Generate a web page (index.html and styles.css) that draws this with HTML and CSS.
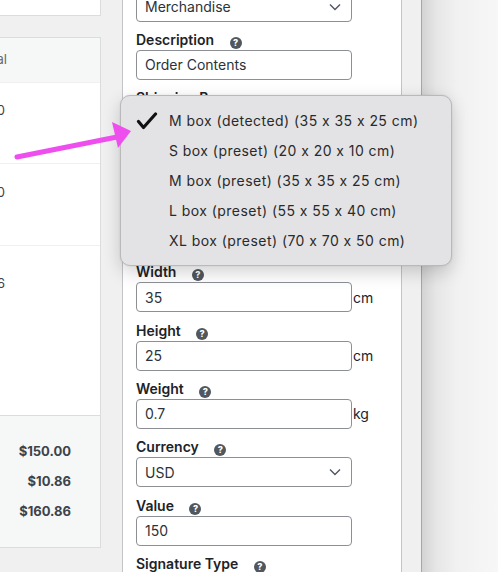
FILE: index.html
```html
<!DOCTYPE html>
<html>
<head>
<meta charset="utf-8">
<link rel="stylesheet" href="styles.css">
</head>
<body>
<div class="page">
  <div class="left">
    <div class="card card-top"></div>
    <div class="card orders">
      <div class="thead"><span>Total</span></div>
      <div class="row r1"><span>$150.00</span></div>
      <div class="row r2"><span>$150.00</span></div>
      <div class="row r3"><span>$10.86</span></div>
      <div class="totals">
        <div class="tline"><span class="tlabel">Items Subtotal:</span><b>$150.00</b></div>
        <div class="tline"><span class="tlabel">Shipping:</span><b>$10.86</b></div>
        <div class="tline"><span class="tlabel">Order Total:</span><b>$160.86</b></div>
      </div>
    </div>
  </div>
  <div class="gutter"></div>
  <div class="panel">
    <div class="form">
      <div class="field">
        <div class="label">Contents Type <span class="help">?</span></div>
        <div class="select"><span>Merchandise</span><svg class="chev" width="12" height="8" viewBox="0 0 12 8"><path d="M1 1.5 L6 6.5 L11 1.5" fill="none" stroke="#50575e" stroke-width="1.4"/></svg></div>
      </div>
      <div class="field">
        <div class="label">Description <span class="help">?</span></div>
        <input class="input" value="Order Contents">
      </div>
      <div class="field">
        <div class="label">Shipping Box <span class="help">?</span></div>
        <div class="select"><span></span><svg class="chev" width="12" height="8" viewBox="0 0 12 8"><path d="M1 1.5 L6 6.5 L11 1.5" fill="none" stroke="#50575e" stroke-width="1.4"/></svg></div>
        <div class="box-gap"></div>
      </div>
      <div class="field">
        <div class="label">Width <span class="help">?</span></div>
        <div class="unitrow"><input class="input" value="35"><span class="unit">cm</span></div>
      </div>
      <div class="field">
        <div class="label">Height <span class="help">?</span></div>
        <div class="unitrow"><input class="input" value="25"><span class="unit">cm</span></div>
      </div>
      <div class="field">
        <div class="label">Weight <span class="help">?</span></div>
        <div class="unitrow"><input class="input" value="0.7"><span class="unit">kg</span></div>
      </div>
      <div class="field">
        <div class="label">Currency <span class="help">?</span></div>
        <div class="select"><span>USD</span><svg class="chev" width="12" height="8" viewBox="0 0 12 8"><path d="M1 1.5 L6 6.5 L11 1.5" fill="none" stroke="#50575e" stroke-width="1.4"/></svg></div>
      </div>
      <div class="field">
        <div class="label">Value <span class="help">?</span></div>
        <input class="input" value="150">
      </div>
      <div class="field">
        <div class="label">Signature Type <span class="help">?</span></div>
        <div class="select"><span></span></div>
      </div>
    </div>
  </div>
  <div class="scroll"></div>
  <div class="shade"></div>

  <div class="menu">
    <div class="item"><svg class="check" width="22" height="18" viewBox="0 0 22 18"><path d="M2.5 9.5 L7.5 15.5 L19.5 2" fill="none" stroke="#111" stroke-width="3.2" stroke-linecap="round" stroke-linejoin="round"/></svg>M box (detected) (35 x 35 x 25 cm)</div>
    <div class="item">S box (preset) (20 x 20 x 10 cm)</div>
    <div class="item">M box (preset) (35 x 35 x 25 cm)</div>
    <div class="item">L box (preset) (55 x 55 x 40 cm)</div>
    <div class="item">XL box (preset) (70 x 70 x 50 cm)</div>
  </div>

  <svg class="arrow" width="140" height="165" viewBox="0 0 140 165">
    <line x1="17" y1="157" x2="117" y2="137" stroke="#ef4eef" stroke-width="5" stroke-linecap="round"/>
    <polygon points="112,122 131,131 118,148" fill="#ef4eef"/>
  </svg>
</div>
</body>
</html>
```

FILE: styles.css
```css
* { box-sizing: border-box; }
html, body { margin: 0; padding: 0; }
body {
  width: 498px;
  height: 572px;
  overflow: hidden;
  background: #f0f0f1;
  font-family: "Inter", "Liberation Sans", sans-serif;
  font-feature-settings: "calt" 0;
  color: #1d2327;
}
.page {
  position: relative;
  display: flex;
  width: 498px;
  height: 572px;
  overflow: hidden;
}

/* left order column */
.left {
  width: 101px;
  flex: none;
  overflow: hidden;
}
.card {
  width: 300px;
  margin-left: -199px;
  background: #fff;
  border: 1px solid #dcdcde;
}
.card-top {
  height: 16px;
  border-top: none;
}
.orders {
  margin-top: 21px;
}
.thead {
  height: 45px;
  background: #f6f7f7;
  border-bottom: 1px solid #f0f0f1;
  text-align: right;
  padding-right: 93px;
  padding-top: 13px;
  font-size: 13px;
  color: #646970;
}
.row {
  text-align: right;
  padding-right: 95px;
  font-size: 13px;
  color: #3c434a;
  border-bottom: 1px solid #f0f0f1;
}
.r1 { height: 81px; padding-top: 19px; }
.r2 { height: 82px; padding-top: 20px; }
.r3 { height: 170px; padding-top: 29px; border-bottom: 1px solid #dcdcde; }
.totals {
  background: #f6f7f7;
  height: 131px;
  padding-top: 20px;
}
.tline {
  display: flex;
  justify-content: flex-end;
  gap: 30px;
  height: 30px;
  line-height: 30px;
  padding-right: 29px;
  font-size: 13px;
  color: #3c434a;
}
.tline b { font-weight: 700; }

.gutter { width: 21px; flex: none; }

/* side panel */
.panel {
  width: 280px;
  flex: none;
  background: #fff;
  border-left: 1px solid #c3c4c7;
  border-right: 1px solid #c3c4c7;
  padding-left: 13px;
  overflow: hidden;
}
.form { margin-top: -28.5px; }
.field { margin-bottom: 8.3px; }
.label {
  height: 20px;
  line-height: 20px;
  font-size: 14px;
  font-weight: 600;
  color: #1d2327;
  white-space: nowrap;
}
.help {
  display: inline-block;
  width: 12px;
  height: 12px;
  border-radius: 50%;
  background: #50575e;
  color: #fff;
  font-size: 9px;
  font-weight: 800;
  line-height: 12px;
  text-align: center;
  margin-left: 12px;
  vertical-align: -1px;
}
.input, .select {
  display: block;
  width: 216px;
  height: 30px;
  border: 1px solid #8c8f94;
  border-radius: 4px;
  background: #fff;
  font-family: "Inter", "Liberation Sans", sans-serif;
  font-size: 14px;
  color: #2c3338;
  padding: 0 8px;
  margin: 0;
  outline: none;
}
.select {
  display: flex;
  align-items: center;
  justify-content: space-between;
  padding-right: 10px;
  white-space: nowrap;
  overflow: hidden;
}
.chev { flex: none; }
.box-gap {
  height: 116px;
}
.unitrow {
  display: flex;
  align-items: center;
}
.unit {
  font-size: 14px;
  color: #1d2327;
  margin-left: 1px;
}

.scroll {
  width: 20px;
  flex: none;
  background: #f0f0f0;
  border-right: 1px solid #a7a7a7;
}
.shade {
  flex: 1;
  background: linear-gradient(to right, #d3d3d3 0px, #e6e6e6 14px, #f1f1f1 35px, #f7f7f7 76px);
}

/* popup menu */
.menu {
  position: absolute;
  left: 120px;
  top: 95px;
  width: 332px;
  height: 171px;
  background: #e3e3e5;
  border: 1px solid #b9b9bb;
  border-radius: 10px;
  box-shadow: 0 6px 18px rgba(0,0,0,0.18), 0 0 2px rgba(0,0,0,0.1);
  padding-top: 10px;
}
.item {
  position: relative;
  height: 30px;
  line-height: 30px;
  padding-left: 48px;
  font-size: 14px;
  letter-spacing: 0.45px;
  color: #2a2a2a;
  white-space: nowrap;
}
.check {
  position: absolute;
  left: 15px;
  top: 6px;
}
.arrow {
  position: absolute;
  left: 0;
  top: 0;
}
```
